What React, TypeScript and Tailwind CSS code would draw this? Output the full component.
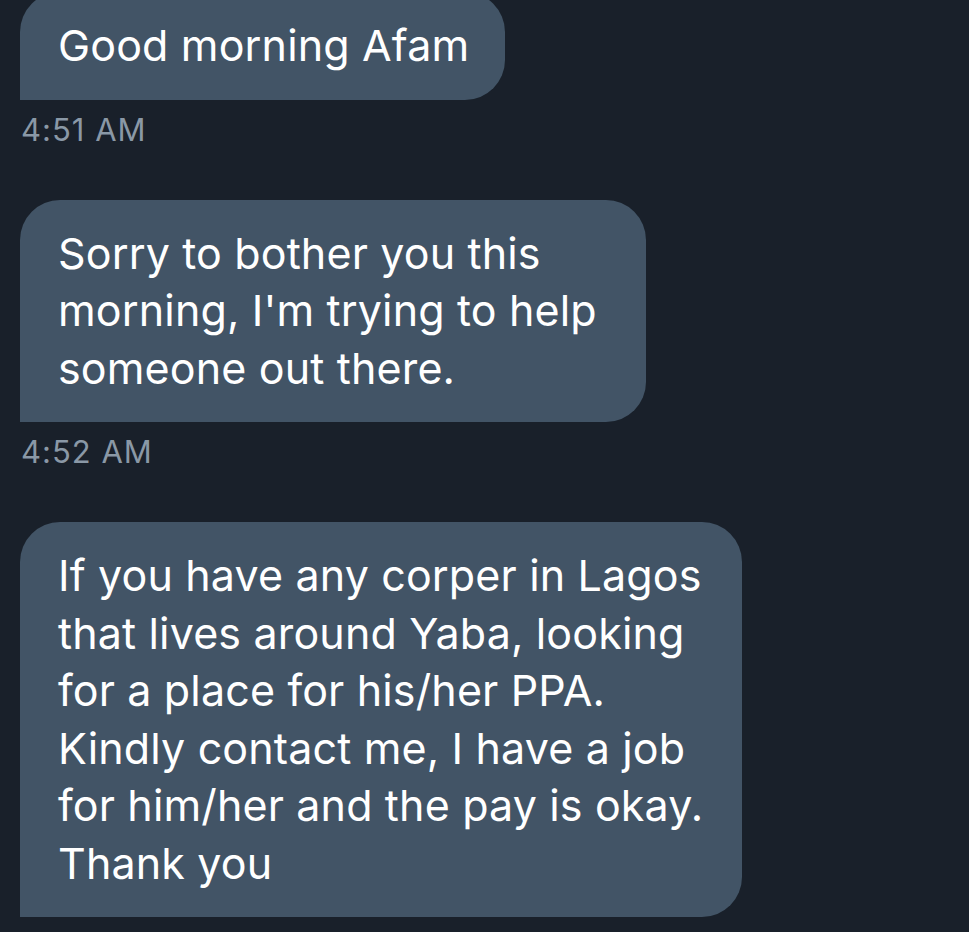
import React from "react";

const messages = [
  {
    lines: ["Good morning Afam"],
    time: "4:51 AM",
    width: "w-[485px]",
  },
  {
    lines: ["Sorry to bother you this", "morning, I'm trying to help", "someone out there."],
    time: "4:52 AM",
    width: "w-[626px]",
  },
  {
    lines: [
      "If you have any corper in Lagos",
      "that lives around Yaba, looking",
      "for a place for his/her PPA.",
      "Kindly contact me, I have a job",
      "for him/her and the pay is okay.",
      "Thank you",
    ],
    time: "",
    width: "w-[722px]",
  },
];

const Bubble = ({ lines, width }: { lines: string[]; width: string }) => (
  <div
    className={`${width} bg-[#425466] text-white rounded-[40px] rounded-bl-none pl-[38px] pr-6 py-[25px] text-[43px] leading-[57.5px] tracking-[0.15px]`}
  >
    {lines.map((l, i) => (
      <div key={i} className="whitespace-nowrap">
        {l}
      </div>
    ))}
  </div>
);

const App = () => {
  return (
    <div
      className="w-[969px] h-[932px] overflow-hidden bg-[#19202a]"
      style={{ fontFamily: "Inter, Roboto, 'Liberation Sans', sans-serif" }}
    >
      <div className="flex flex-col pl-5 -mt-[8px]">
        {messages.map((m, i) => (
          <div key={i} className="flex flex-col">
            <Bubble lines={m.lines} width={m.width} />
            {m.time && (
              <div className="mt-[12px] mb-[52px] h-[36px] text-[31px] leading-[36px] tracking-[1px] text-[#8a98a6] pl-px">
                {m.time}
              </div>
            )}
          </div>
        ))}
      </div>
    </div>
  );
};

export default App;
